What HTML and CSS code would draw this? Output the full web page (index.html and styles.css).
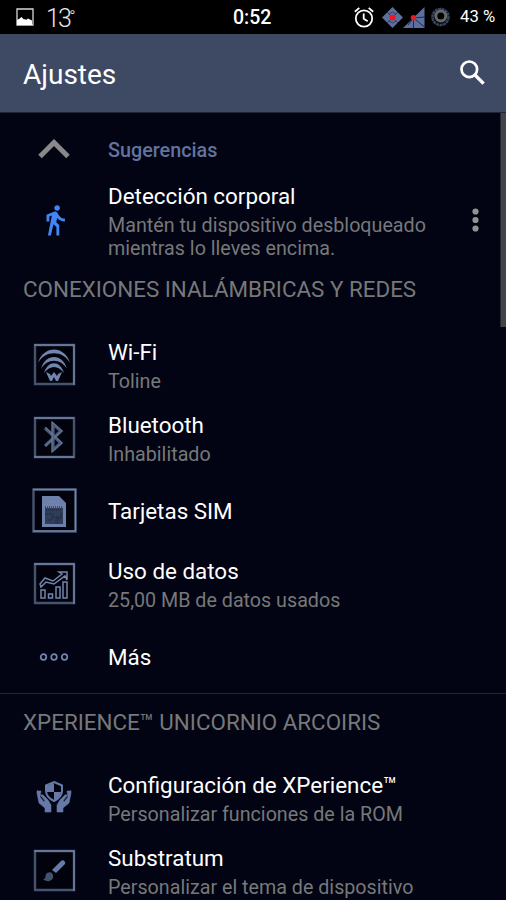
FILE: index.html
```
<!DOCTYPE html>
<html lang="es">
<head>
<meta charset="utf-8">
<title>Ajustes</title>
<link rel="stylesheet" href="styles.css">
</head>
<body>
<div class="screen">
  <header class="status">
    <svg class="photo" width="18" height="18" viewBox="0 0 18 18"><path d="M1 1h16v16H1z" fill="none" stroke="#d8d8dc" stroke-width="1.3"/><path d="M1 17V12l2-1 2.500-2 2.500 2.500 1-.5 1 1 2-1.500 4 2v4.500z" fill="#fff"/></svg>
    <span class="temp">13<span class="degree">°</span></span>
    <span class="clock">0:52</span>
    <svg class="alarm" width="20" height="21" viewBox="0 0 20 21"><g fill="none" stroke="#fff" stroke-width="1.800"><circle cx="10" cy="11.500" r="8.200"/><path d="M.8 4.700 5.300.9M14.700.9l4.500 3.800M9.700 6.500v5.300l4 2.500"/></g></svg>
    <svg class="wifi-status" width="21" height="21" viewBox="0 0 21 21"><path d="M10.500 0 21 10.500 10.500 21 0 10.500z" fill="#5c70a0"/><path d="m5 5 11 11M5 16 16 5M7 7l3.500-2L14 7M7 14l3.500 2 3.500-2" stroke="#26324f" stroke-width=".8" fill="none"/><circle cx="10.500" cy="10.500" r="3" fill="#ed1820"/></svg>
    <svg class="signal" width="22" height="21" viewBox="0 0 22 21"><path d="M21.500 0v21H0z" fill="#5c70a0"/><path d="m10.500 11 11-1M10.500 11l11 9M10.500 11v10M10.500 11 5 18" stroke="#17213a" stroke-width=".9"/><circle cx="10.500" cy="10.700" r="2.700" fill="#ed1820"/></svg>
    <svg class="battery" width="19" height="20" viewBox="0 0 19 20"><circle cx="9.500" cy="10" r="8" fill="none" stroke="#35435e" stroke-width="2.600" stroke-dasharray="3 .5"/><circle cx="9.800" cy="9" r="5" fill="none" stroke="#68696c" stroke-width="3"/></svg>
    <span class="percent">43 %</span>
  </header>
  <div class="toolbar">
    <h1>Ajustes</h1>
    <svg width="25" height="25" viewBox="0 0 25 25"><g fill="none" stroke="#fff"><circle cx="9.300" cy="9.300" r="7.800" stroke-width="2.700"/><path d="m15 15 8.600 8.600" stroke-width="3.400"/></g></svg>
  </div>
  <main>
    <section class="suggestions">
      <div class="suggestion-head">
        <div class="icon chevron"><svg width="32" height="20" viewBox="0 0 32 20"><path d="M2 17.500 16 3.500l14 14" fill="none" stroke="#898989" stroke-width="5"/></svg></div>
        <span>Sugerencias</span>
      </div>
      <div class="tip">
        <div class="icon walk"><svg width="34" height="34" viewBox="0 0 24 24"><path fill="#4285f4" d="M13.500 5.500c1.100 0 2-.9 2-2s-.9-2-2-2-2 .9-2 2 .9 2 2 2zM9.800 8.900 7 23h2.100l1.800-8 2.100 2v6h2v-7.500l-2.100-2 .6-3C14.800 12 16.800 13 19 13v-2c-1.900 0-3.500-1-4.300-2.400l-1-1.600c-.4-.6-1-1-1.700-1-.3 0-.5.100-.8.100L6 8.300V13h2V9.600l1.800-.7"/></svg></div>
        <div class="copy"><h3>Detección corporal</h3><p>Mantén tu dispositivo desbloqueado<br>mientras lo lleves encima.</p></div>
        <svg class="more" width="7" height="24" viewBox="0 0 7 24" fill="#929292"><circle cx="3.500" cy="3.500" r="3.100"/><circle cx="3.500" cy="12" r="3.100"/><circle cx="3.500" cy="20.500" r="3.100"/></svg>
      </div>
    </section>
    <section class="group">
      <h2>CONEXIONES INALÁMBRICAS Y REDES</h2>
      <div class="row">
        <div class="icon"><svg width="46" height="46" viewBox="0 0 46 46"><path class="frame" d="M4 4h39v39H4z"/><path class="edge" d="M3 4h40v40"/><g fill="#7185ae"><path d="M7 22C12 4 34 4 39 22 32 9 14 9 7 22z"/><path d="M10 28C14 12 32 12 36 28 30 17 16 17 10 28z"/><path d="M13 32c4-13 16-13 20 0-6-8-14-8-20 0z"/><path d="m15 31 4 9h2l2-4 2 4h2l4-9-4 2-1 2-3-4-3 4-1-2z"/></g></svg></div>
        <div class="copy"><h3>Wi-Fi</h3><p>Toline</p></div>
      </div>
      <div class="row">
        <div class="icon"><svg width="46" height="46" viewBox="0 0 46 46"><path class="frame" d="M4 4h39v39H4z"/><path class="edge" d="M3 4h40M3 43h40"/><path d="m14 14 16 15-8 7V10l8 7-16 15" fill="none" stroke="#4b5b79" stroke-width="3.200"/><path d="m14 13 17 16-10 9V8l10 9-17 15" fill="none" stroke="#7786a2" stroke-width=".7"/></svg></div>
        <div class="copy"><h3>Bluetooth</h3><p>Inhabilitado</p></div>
      </div>
      <div class="row single">
        <div class="icon"><svg width="46" height="46" viewBox="0 0 46 46"><path class="frame" d="M2.500 2.500h42v42h-42z"/><path class="edge" d="M2 2.500h42.500V44H2"/><path d="M11 9h17l7 7v24H11z" fill="#6c80a9"/><path d="M14 21h18v16H14z" fill="#303d59"/><path d="M14 20h18M15 23h16M14 27h8v3h8v-4M15 33h6v-3M25 36v-5h6M27 32v5" fill="none" stroke="#172139" stroke-dasharray="1 1"/><path d="M14 15h15M13 18h19" stroke="#8191b1" stroke-dasharray="1 2"/></svg></div>
        <div class="copy"><h3>Tarjetas SIM</h3></div>
      </div>
      <div class="row">
        <div class="icon"><svg width="46" height="46" viewBox="0 0 46 46"><path class="frame" d="M4 4h39v39H4z"/><path class="edge" d="M3 4h40v40"/><path d="M10 30h4v8h-4zM17.500 34h4v4h-4zM25 27h4v11h-4zM32 22h4v16h-4zM9 24l5-6 8 3 9-7-3-2h8v8l-2-4-11 8-8-2-5 5z" fill="none" stroke="#7285ac" stroke-width="1.500"/></svg></div>
        <div class="copy"><h3>Uso de datos</h3><p>25,00 MB de datos usados</p></div>
      </div>
      <div class="row single">
        <div class="icon dots"><svg width="30" height="10" viewBox="0 0 30 10"><g fill="none" stroke="#7286b0" stroke-width="1.700"><circle cx="4.500" cy="5" r="2.800"/><circle cx="15" cy="5" r="2.800"/><circle cx="25.500" cy="5" r="2.800"/></g></svg></div>
        <div class="copy"><h3>Más</h3></div>
      </div>
    </section>
    <section class="group second">
      <h2>XPERIENCE™ UNICORNIO ARCOIRIS</h2>
      <div class="row">
        <div class="icon"><svg width="36" height="34" viewBox="0 0 36 34"><path d="m18 2 8 3.500V11c0 5-4 8-8 10-4-2-8-5-8-10V5.500z" fill="#01020e" stroke="#667aa8" stroke-width="2"/><path d="M18 3v9h-7V6zM18 12h7c-1 5-4 7-7 8z" fill="#667aa8"/><path d="M2 11c-1-1-1 0-1 2l2 10 6 5v4h6v-7l-3-5-5-5c-2-1-3 1-1 2l3 4-1 1-4-5 1-6zM34 11c1-1 1 0 1 2l-2 10-6 5v4h-6v-7l3-5 5-5c2-1 3 1 1 2l-3 4 1 1 4-5-1-6z" fill="#667aa8" stroke="#667aa8" stroke-width=".6"/></svg></div>
        <div class="copy"><h3>Configuración de XPerience™</h3><p>Personalizar funciones de la ROM</p></div>
      </div>
      <div class="row">
        <div class="icon"><svg width="46" height="46" viewBox="0 0 46 46"><path class="frame" d="M4 4h39v39H4z"/><path class="edge" d="M3 4h40v40"/><path d="m21 23 9-9c2-2 5 1 4 3l-9 9z" fill="#667ba9"/><path d="M12 32c4 0 1-3 4-6 4-2 7 1 6 5-2 4-7 4-10 1z" fill="#43516e"/></svg></div>
        <div class="copy"><h3>Substratum</h3><p>Personalizar el tema de dispositivo</p></div>
      </div>
    </section>
    <div class="scrollbar"></div>
  </main>
</div>
</body>
</html>
```
FILE: styles.css
```
* { box-sizing: border-box; }
body { margin: 0; background: #000; font-family: Roboto, sans-serif; }
h1, h2, h3, p { margin: 0; font-weight: 400; }
svg { display: block; flex: none; }
.screen { width: 506px; height: 900px; overflow: hidden; background: #020413; color: #fff; }
.status { height: 34px; display: flex; align-items: center; background: #000; padding-left: 16px; }
.temp { margin-left: 12px; width: 28px; font-size: 25px; font-weight: 300; letter-spacing: -1.800px; line-height: 34px; white-space: nowrap; color: #e6e6e6; }
.degree { font-size: 17px; vertical-align: 5px; margin-left: -1px; }
.clock { margin-left: 159px; width: 42px; font-size: 19.500px; font-weight: 500; white-space: nowrap; }
.alarm { margin-left: 79px; }
.wifi-status { margin-left: 8px; }
.battery { margin-left: 6px; }
.percent { margin-left: 10px; font-size: 16.700px; white-space: nowrap; line-height: 36px; }
.toolbar { height: 79px; padding: 0 21px 0 23px; background: #3e4a64; border-bottom: 1px solid #202637; display: flex; align-items: center; justify-content: space-between; }
.toolbar h1 { font-size: 28px; line-height: 40px; padding-top: 3px; }
.toolbar svg { margin-bottom: 1px; }
main { position: relative; }
.suggestions { height: 148px; }
.suggestion-head { height: 74px; display: flex; align-items: center; color: #61739f; font-size: 19.800px; font-weight: 500; }
.icon { width: 108px; flex: none; display: flex; justify-content: center; padding-bottom: 2px; }
.tip { display: flex; height: 74px; }
.tip .copy { width: 364px; margin-top: -5px; }
.tip .copy p { line-height: 23px; padding-top: 4px; }
.walk { padding: 16px 0 0 1px; }
.chevron { padding-bottom: 3px; }
.dots { padding-bottom: 0; }
.more { margin-top: 21px; }
h3 { font-size: 22.400px; line-height: 28px; color: #fff; }
p { font-size: 19.700px; line-height: 28px; color: #777879; }
h2 { height: 67px; padding-left: 23px; font-size: 22.400px; line-height: 56px; color: #777879; }
.row { height: 73px; display: flex; align-items: center; }
.row .copy { height: 53px; display: flex; flex-direction: column; gap: 2px; }
.single .copy { justify-content: center; padding-top: 1px; }
.frame { fill: #01020c; stroke: #46536c; stroke-width: 2.400; }
.edge { fill: none; stroke: #7183a7; stroke-width: 1.500; }
.second { border-top: 1px solid #22283a; }
.scrollbar { position: absolute; top: 0; right: 0; width: 6px; height: 214px; background: #444349; border-left: 1px solid #29272e; }
```
